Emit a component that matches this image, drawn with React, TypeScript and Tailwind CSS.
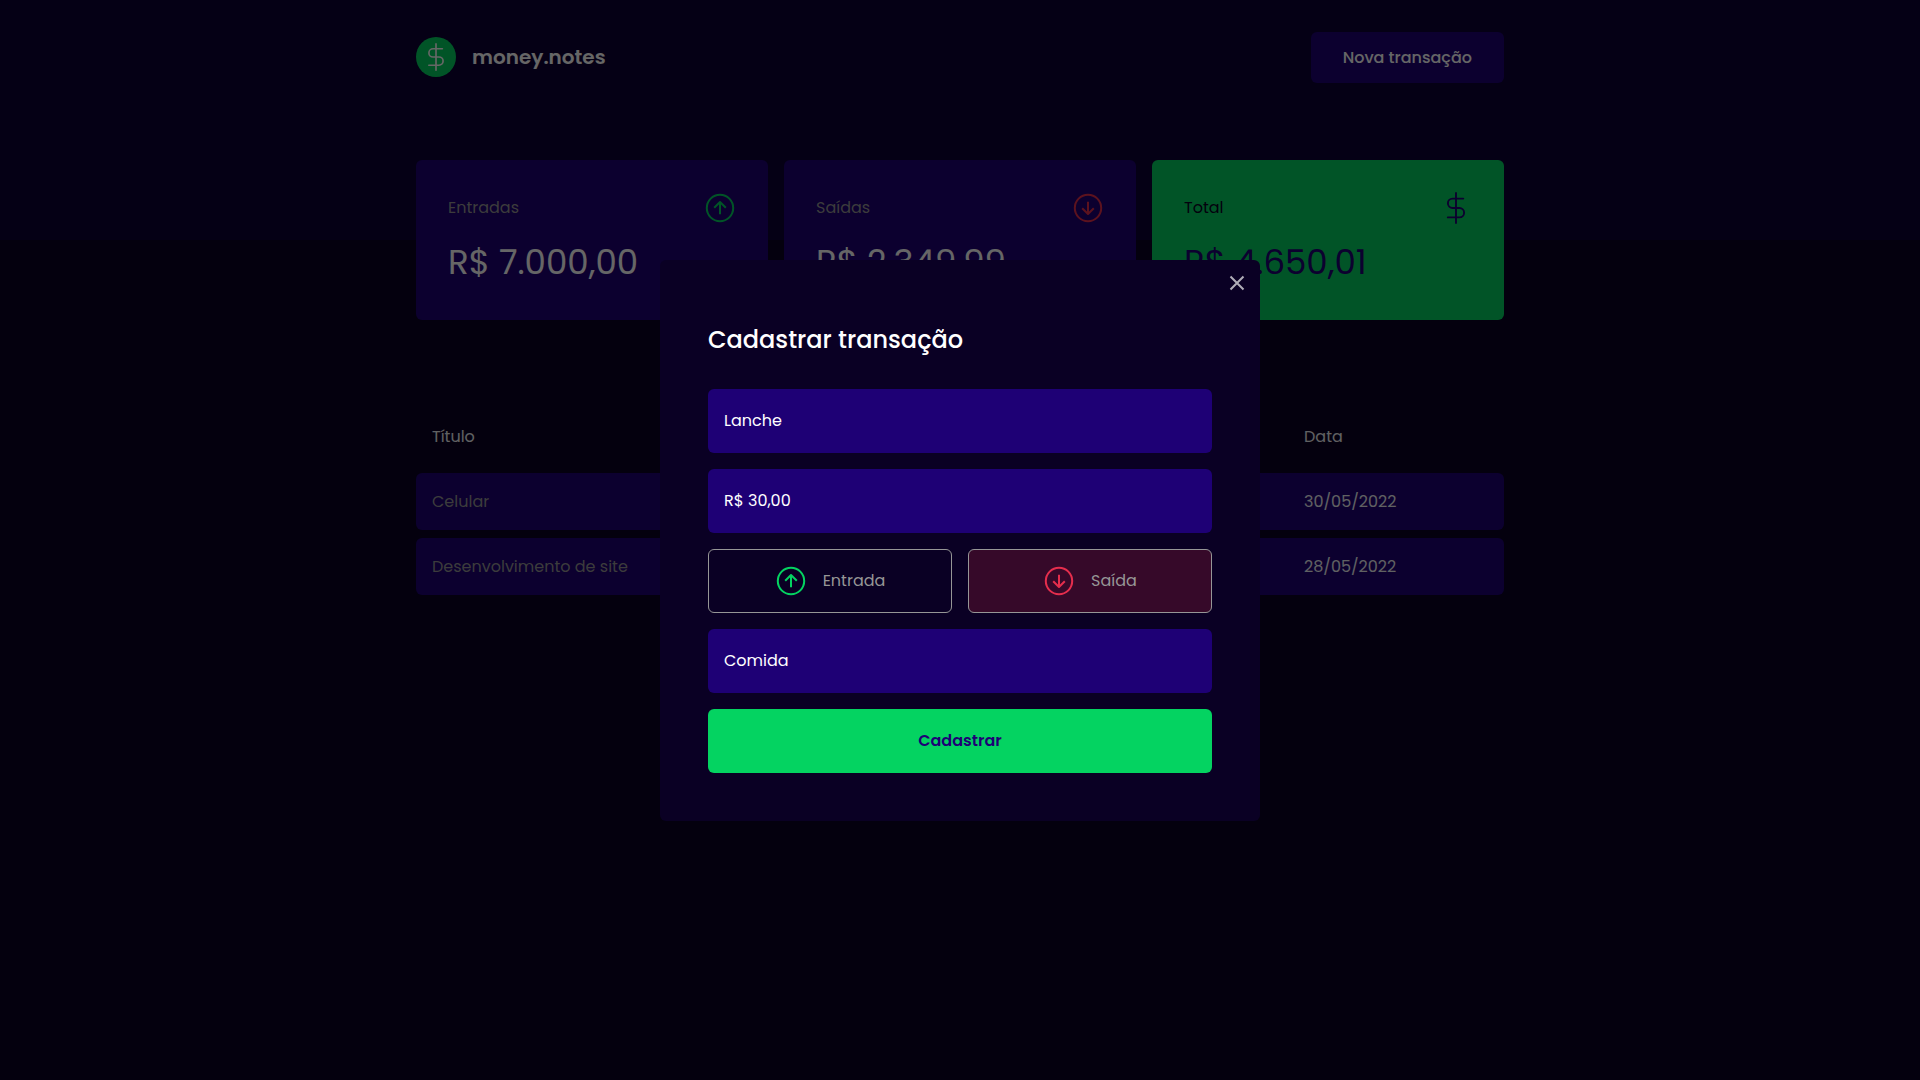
import { useState } from "react";
import type { ReactNode } from "react";

function ArrowCircle({ down = false }: { down?: boolean }) {
  return (
    <svg
      className={down ? "size-8 text-[#e52e4d]" : "size-8 text-[#04d361]"}
      viewBox="0 0 32 32"
      fill="none"
      stroke="currentColor"
      strokeWidth="2"
      strokeLinejoin="round"
      aria-hidden="true"
    >
      <circle cx="16" cy="16" r="13.2" />
      <path d={down ? "M16 9.7v12M10.2 16.2l5.8 5.8 5.8-5.8" : "M16 22.3v-12M10.2 15.8l5.8-5.8 5.8 5.8"} />
    </svg>
  );
}

function Dollar({ className }: { className: string }) {
  return (
    <svg
      className={className}
      viewBox="0 0 32 32"
      fill="none"
      stroke="currentColor"
      strokeWidth="1.9"
      strokeLinecap="round"
      strokeLinejoin="round"
      aria-hidden="true"
    >
      <path d="M16 1v30M23.3 6.6H12.6a4.7 4.7 0 0 0 0 9.4h6.8a4.7 4.7 0 0 1 0 9.4H7.8" />
    </svg>
  );
}

function SummaryCard({ label, value, icon, total = false }: { label: string; value: string; icon: ReactNode; total?: boolean }) {
  return (
    <section className={total ? "h-40 rounded-md bg-[#04d361] px-8 pt-8 text-[#1e0075]" : "h-40 rounded-md bg-[#1e0075] px-8 pt-8 text-white"}>
      <div className="flex items-center justify-between">
        <h2 className={total ? "text-base text-[#0a0024]" : "text-base text-[#969696]"}>{label}</h2>
        {icon}
      </div>
      <p className="mt-3.5 text-[34px] leading-12">{value}</p>
    </section>
  );
}

const transactions = [
  { title: "Celular", amount: "R$ 2.349,99", category: "Eletrônicos", date: "30/05/2022" },
  { title: "Desenvolvimento de site", amount: "R$ 7.000,00", category: "Trabalho", date: "28/05/2022" },
];

const field = "h-16 w-full rounded-md bg-[#1e0075] px-4 text-base text-white outline-none";

export default function App() {
  const [kind, setKind] = useState("out");
  return (
    <div className="min-h-screen bg-[#0a0024] font-['Poppins','Inter',sans-serif]">
      <header className="h-60 bg-[#0d0035] pt-8">
        <div className="mx-auto flex max-w-[1120px] items-start justify-between px-4">
          <div className="flex h-[50px] items-center gap-4">
            <span className="flex size-10 items-center justify-center rounded-full bg-[#04d361]">
              <Dollar className="size-7 text-white" />
            </span>
            <h1 className="text-xl font-semibold text-white">money.notes</h1>
          </div>
          <button type="button" className="h-[51px] rounded-md bg-[#1e0075] px-8 text-base font-medium text-white">
            Nova transação
          </button>
        </div>
      </header>

      <main className="mx-auto max-w-[1120px] px-4">
        <div className="-mt-20 grid grid-cols-3 gap-4">
          <SummaryCard label="Entradas" value="R$ 7.000,00" icon={<ArrowCircle />} />
          <SummaryCard label="Saídas" value="R$ 2.349,99" icon={<ArrowCircle down />} />
          <SummaryCard label="Total" value="R$ 4.650,01" icon={<Dollar className="size-8" />} total />
        </div>

        <table className="mt-20 w-full table-fixed border-separate border-spacing-x-0 border-spacing-y-2 text-left text-base">
          <thead>
            <tr className="h-[57px] text-[#f0f2f5]">
              <th className="px-4 font-normal">Título</th>
              <th className="px-4 font-normal">Valor</th>
              <th className="px-4 font-normal">Categoria</th>
              <th className="w-[216px] px-4 font-normal">Data</th>
            </tr>
          </thead>
          <tbody>
            {transactions.map((t) => (
              <tr key={t.title} className="h-[57px] text-[#f0f2f5]">
                <td className="rounded-l-md bg-[#1e0075] px-4 text-[#969696]">{t.title}</td>
                <td className="bg-[#1e0075] px-4">{t.amount}</td>
                <td className="bg-[#1e0075] px-4">{t.category}</td>
                <td className="rounded-r-md bg-[#1e0075] px-4">{t.date}</td>
              </tr>
            ))}
          </tbody>
        </table>
      </main>

      <div className="fixed inset-0 flex items-center justify-center bg-black/60">
        <div role="dialog" aria-modal="true" aria-labelledby="dialog-title" className="relative w-full max-w-[600px] rounded-md bg-[#0a0024] p-12">
          <button type="button" aria-label="Fechar" className="absolute top-2 right-2 flex size-[30px] items-center justify-center text-[#b0adb8]">
            <svg className="size-4" viewBox="0 0 16 16" fill="none" stroke="currentColor" strokeWidth="2" aria-hidden="true">
              <path d="M1.5 1.5l13 13M14.5 1.5l-13 13" />
            </svg>
          </button>
          <form className="flex flex-col gap-4" onSubmit={(e) => e.preventDefault()}>
            <h2 id="dialog-title" className="pt-3.5 pb-[15px] text-2xl leading-9 font-medium text-white">
              Cadastrar transação
            </h2>
            <input className={field} aria-label="Título" placeholder="Título" defaultValue="Lanche" />
            <input className={field} aria-label="Valor" placeholder="Valor" defaultValue="R$ 30,00" />
            <div className="grid grid-cols-2 gap-4">
              <button
                type="button"
                aria-pressed={kind === "in"}
                onClick={() => setKind("in")}
                className="flex h-16 items-center justify-center gap-4 rounded-md border border-[#969696] text-base text-[#969696] aria-pressed:bg-[#09332e]"
              >
                <ArrowCircle />
                Entrada
              </button>
              <button
                type="button"
                aria-pressed={kind === "out"}
                onClick={() => setKind("out")}
                className="flex h-16 items-center justify-center gap-4 rounded-md border border-[#969696] text-base text-[#969696] aria-pressed:bg-[#360929]"
              >
                <ArrowCircle down />
                Saída
              </button>
            </div>
            <input className={field} aria-label="Categoria" placeholder="Categoria" defaultValue="Comida" />
            <button type="submit" className="h-16 rounded-md bg-[#04d361] text-base font-semibold text-[#1e0075]">
              Cadastrar
            </button>
          </form>
        </div>
      </div>
    </div>
  );
}
